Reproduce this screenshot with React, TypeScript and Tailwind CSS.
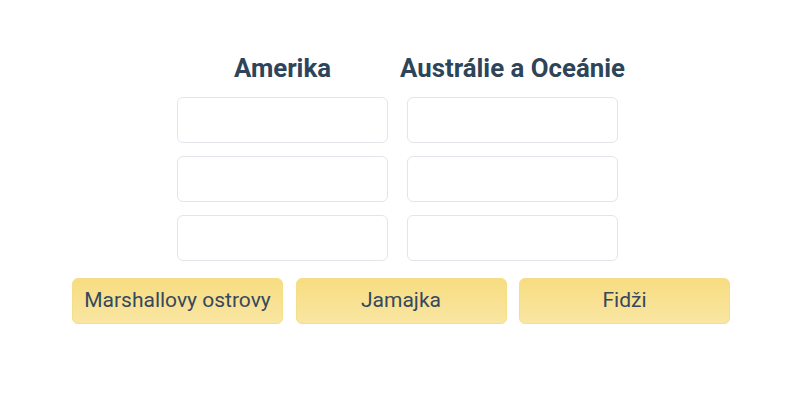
const regions = ['Amerika', 'Austrálie a Oceánie']
const choices = ['Marshallovy ostrovy', 'Jamajka', 'Fidži']

function DropSlot() {
  return <div className="h-[46px] w-[211px] rounded-md border border-[#e2e6ea] bg-white" />
}

export default function App() {
  return (
    <div className="h-[400px] w-[800px] bg-white font-['Roboto',sans-serif]">
      <div className="ml-[72px] flex w-[658px] flex-col pt-[53px]">
        <div className="ml-[105px] grid w-[441px] grid-cols-[211px_211px] gap-x-[19px]">
          {regions.map((name) => (
            <div key={name} className="flex flex-col gap-[13px]">
              <h2 className="mb-px flex justify-center whitespace-nowrap text-[25.8px] font-bold leading-[30px] text-[#2e4459]">
                <span>{name}</span>
              </h2>
              <DropSlot />
              <DropSlot />
              <DropSlot />
            </div>
          ))}
        </div>
        <div className="mt-[17px] flex gap-[12.5px]">
          {choices.map((c) => (
            <button
              key={c}
              className="h-[46px] w-[211px] shrink-0 rounded-md border border-[#f5dd8a] bg-gradient-to-b from-[#f7dc80] to-[#f9e6a2] text-[21px] text-[#34495e]"
            >
              {c}
            </button>
          ))}
        </div>
      </div>
    </div>
  )
}
